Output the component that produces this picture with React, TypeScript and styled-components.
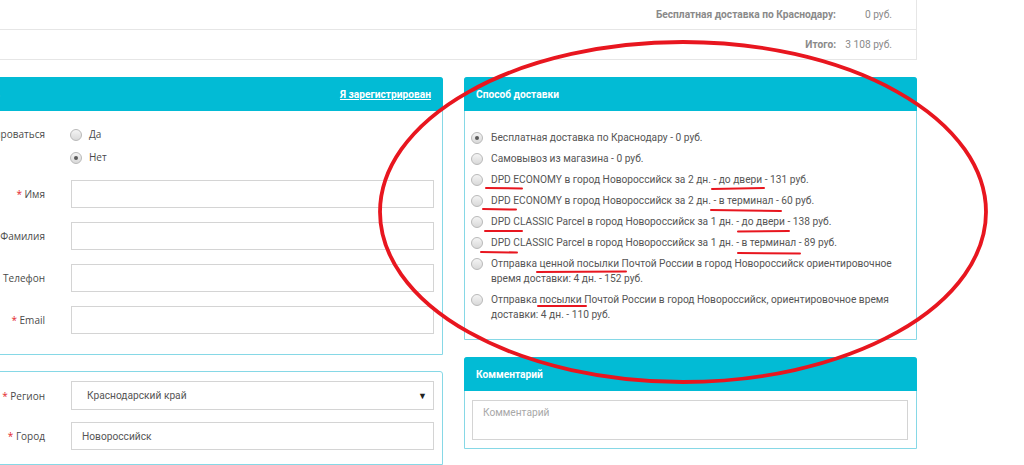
import React from "react";
import styled, { createGlobalStyle } from "styled-components";

const deliveryOptions: { text: React.ReactNode; checked?: boolean }[] = [
  { text: "Бесплатная доставка по Краснодару - 0 руб.", checked: true },
  { text: "Самовывоз из магазина - 0 руб." },
  { text: "DPD ECONOMY в город Новороссийск за 2 дн. - до двери - 131 руб." },
  { text: "DPD ECONOMY в город Новороссийск за 2 дн. - в терминал - 60 руб." },
  { text: "DPD CLASSIC Parcel в город Новороссийск за 1 дн. - до двери - 138 руб." },
  { text: "DPD CLASSIC Parcel в город Новороссийск за 1 дн. - в терминал - 89 руб." },
  {
    text: (
      <>
        Отправка ценной посылки Почтой России в город Новороссийск ориентировочное
        <br />
        время доставки: 4 дн. - 152 руб.
      </>
    ),
  },
  {
    text: (
      <>
        Отправка посылки Почтой России в город Новороссийск, ориентировочное время
        <br />
        доставки: 4 дн. - 110 руб.
      </>
    ),
  },
];

// hand-drawn red marks over the delivery list
const marks = [
  "M486 188 L522 188.5",
  "M712 189 L764 188",
  "M483 209 L516 209.5",
  "M711 210 L781 211",
  "M485 231 L522 231",
  "M738 231.5 L789 231",
  "M481 252 L517 252.5",
  "M738 253 L800 253.5",
  "M537 272 L626 271.5",
  "M538 306 L586 306",
];

export default function App() {
  return (
    <Root>
      <GlobalStyle />
      <Page>
        <Summary>
          <SummaryRow>
            <SummaryLabel>Бесплатная доставка по Краснодару:</SummaryLabel>
            <SummaryValue>0 руб.</SummaryValue>
          </SummaryRow>
          <SummaryRow>
            <SummaryLabel>Итого:</SummaryLabel>
            <SummaryValue>3 108 руб.</SummaryValue>
          </SummaryRow>
        </Summary>

        <Columns>
          <LeftColumn>
            <Panel>
              <PanelHeader>
                <span>Покупатель</span>
                <HeaderLink href="#">Я зарегистрирован</HeaderLink>
              </PanelHeader>
              <FormBody>
                <FormRow $align="start">
                  <FieldLabel>Зарегистрироваться</FieldLabel>
                  <RadioGroup>
                    <RadioOption>
                      <Radio />
                      Да
                    </RadioOption>
                    <RadioOption>
                      <Radio $checked />
                      Нет
                    </RadioOption>
                  </RadioGroup>
                </FormRow>
                <FormRow>
                  <FieldLabel>
                    <Req>*</Req> Имя
                  </FieldLabel>
                  <TextInput />
                </FormRow>
                <FormRow>
                  <FieldLabel>Фамилия</FieldLabel>
                  <TextInput />
                </FormRow>
                <FormRow>
                  <FieldLabel>Телефон</FieldLabel>
                  <TextInput />
                </FormRow>
                <FormRow>
                  <FieldLabel>
                    <Req>*</Req> Email
                  </FieldLabel>
                  <TextInput />
                </FormRow>
              </FormBody>
            </Panel>

            <Panel>
              <AddressBody>
                <FormRow>
                  <FieldLabel>
                    <Req>*</Req> Регион
                  </FieldLabel>
                  <SelectBox>
                    <span>Краснодарский край</span>
                    <Caret>▼</Caret>
                  </SelectBox>
                </FormRow>
                <FormRow>
                  <FieldLabel>
                    <Req>*</Req> Город
                  </FieldLabel>
                  <TextInput>Новороссийск</TextInput>
                </FormRow>
              </AddressBody>
            </Panel>
          </LeftColumn>

          <RightColumn>
            <Panel>
              <PanelHeader>
                <span>Способ доставки</span>
              </PanelHeader>
              <DeliveryList>
                {deliveryOptions.map((opt, i) => (
                  <DeliveryItem key={i}>
                    <Radio $checked={opt.checked} />
                    <span>{opt.text}</span>
                  </DeliveryItem>
                ))}
              </DeliveryList>
            </Panel>

            <Panel>
              <PanelHeader>
                <span>Комментарий</span>
              </PanelHeader>
              <CommentBody>
                <CommentArea>Комментарий</CommentArea>
              </CommentBody>
            </Panel>
          </RightColumn>
        </Columns>
      </Page>

      <Overlay viewBox="0 0 1024 465">
        <ellipse cx="683" cy="212" rx="303" ry="170" fill="none" stroke="#e8161f" strokeWidth="3.8" />
        {marks.map((d, i) => (
          <path key={i} d={d} stroke="#e8161f" strokeWidth="2" strokeLinecap="round" fill="none" />
        ))}
      </Overlay>
    </Root>
  );
}

const GlobalStyle = createGlobalStyle`
  html, body {
    margin: 0;
    padding: 0;
    background: #fff;
    overflow: hidden;
  }
  body {
    font-family: Roboto, "Liberation Sans", sans-serif;
    font-size: 10.2px;
    color: #555;
  }
`;

const Root = styled.div`
  position: relative;
  width: 1024px;
  height: 465px;
  overflow: hidden;
`;

const Page = styled.div`
  margin-left: -69px;
  width: 986px;
  display: flex;
  flex-direction: column;
`;

const Summary = styled.div`
  border-right: 1px solid #e6e6e6;
`;

const SummaryRow = styled.div`
  height: 29px;
  border-bottom: 1px solid #e6e6e6;
  display: flex;
  align-items: center;
  justify-content: flex-end;
  padding-right: 24px;
  color: #8a8a8a;
`;

const SummaryLabel = styled.span`
  font-weight: bold;
  text-align: right;
`;

const SummaryValue = styled.span`
  width: 56px;
  text-align: right;
`;

const Columns = styled.div`
  display: flex;
  gap: 21px;
  margin-top: 17px;
`;

const LeftColumn = styled.div`
  flex: 0 0 512px;
  display: flex;
  flex-direction: column;
  gap: 16px;
`;

const RightColumn = styled.div`
  flex: 0 0 453px;
  display: flex;
  flex-direction: column;
  gap: 17px;
`;

const Panel = styled.div`
  border: 1px solid #86d8e6;
  border-radius: 3px 3px 0 0;
  background: #fff;
`;

const PanelHeader = styled.div`
  height: 34px;
  margin: -1px -1px 0;
  padding: 0 12px;
  background: #02bbd5;
  border-radius: 3px 3px 0 0;
  color: #fff;
  font-weight: bold;
  display: flex;
  align-items: center;
  justify-content: space-between;
`;

const HeaderLink = styled.a`
  color: #fff;
  text-decoration: underline;
`;

const FormBody = styled.div`
  padding: 15px 8px 20px 0;
  display: flex;
  flex-direction: column;
  gap: 14px;
`;

const AddressBody = styled.div`
  padding: 9px 8px 14px 0;
  display: flex;
  flex-direction: column;
  gap: 12px;
`;

const FormRow = styled.div<{ $align?: "start" | "center" }>`
  display: grid;
  grid-template-columns: 113px 1fr;
  column-gap: 26px;
  align-items: ${(p) => p.$align ?? "center"};
`;

const FieldLabel = styled.label`
  font-family: "Open Sans", "Liberation Sans", sans-serif;
  font-size: 10px;
  line-height: 16px;
  color: #4a4a4a;
  text-align: right;
  white-space: nowrap;
`;

const Req = styled.span`
  color: #e3262b;
`;

const RadioGroup = styled.div`
  display: flex;
  flex-direction: column;
  gap: 7px;
  margin-bottom: 1px;
`;

const RadioOption = styled.label`
  display: flex;
  align-items: center;
  gap: 7px;
  line-height: 16px;
  font-family: "Open Sans", "Liberation Sans", sans-serif;
  font-size: 10px;
  color: #4a4a4a;
  margin-left: -1px;
`;

const Radio = styled.span<{ $checked?: boolean }>`
  flex: 0 0 auto;
  position: relative;
  width: 10px;
  height: 10px;
  border-radius: 50%;
  border: 1px solid #b9b9b9;
  background: linear-gradient(#f4f4f4, #d9d9d9);
  margin-top: 1px;

  &::after {
    content: "";
    display: ${(p) => (p.$checked ? "block" : "none")};
    position: absolute;
    left: 3px;
    top: 3px;
    width: 4px;
    height: 4px;
    border-radius: 50%;
    background: #5a5a5a;
  }
`;

const TextInput = styled.div`
  height: 28px;
  box-sizing: border-box;
  border: 1px solid #d4d4d4;
  background: #fff;
  padding: 0 10px;
  display: flex;
  align-items: center;
  color: #555;
`;

const SelectBox = styled.div`
  height: 29px;
  box-sizing: border-box;
  border: 1px solid #d4d4d4;
  background: #fff;
  padding: 0 6px 0 15px;
  display: flex;
  align-items: center;
  justify-content: space-between;
  color: #555;
`;

const Caret = styled.span`
  font-size: 9px;
  color: #222;
`;

const DeliveryList = styled.div`
  padding: 16px 10px 14px 6px;
  display: flex;
  flex-direction: column;
`;

const DeliveryItem = styled.label`
  display: flex;
  align-items: flex-start;
  gap: 8px;
  padding: 3px 0;
  line-height: 15px;
  color: #555;

  ${Radio} {
    margin-top: 2px;
  }
`;

const CommentBody = styled.div`
  padding: 9px 8px 8px 7px;
`;

const CommentArea = styled.div`
  height: 40px;
  box-sizing: border-box;
  border: 1px solid #d4d4d4;
  padding: 6px 10px;
  color: #a8a8a8;
`;

const Overlay = styled.svg`
  position: absolute;
  left: 0;
  top: 0;
  width: 1024px;
  height: 465px;
  pointer-events: none;
`;
